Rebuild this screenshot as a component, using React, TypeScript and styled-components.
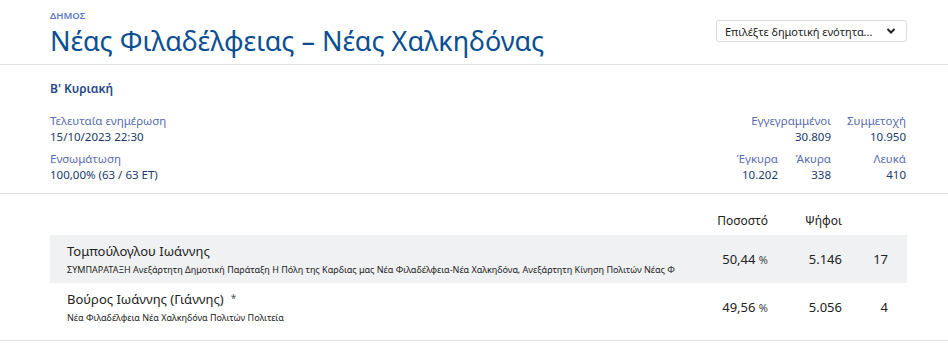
import styled, { createGlobalStyle } from "styled-components";

const GlobalStyle = createGlobalStyle`
    html, body {
        margin: 0;
        padding: 0;
        background: #ffffff;
        font-family: "Noto Sans", "Open Sans", sans-serif;
        color: #222;
    }
`;

interface Candidate {
    name: string;
    mark?: boolean;
    party: string;
    percent: string;
    votes: string;
    seats: number;
}

const candidates: Candidate[] = [
    {
        name: "Τομπούλογλου Ιωάννης",
        party: "ΣΥΜΠΑΡΑΤΑΞΗ Ανεξάρτητη Δημοτική Παράταξη Η Πόλη της Καρδιας μας Νέα Φιλαδέλφεια-Νέα Χαλκηδόνα, Ανεξάρτητη Κίνηση Πολιτών Νέας Φ",
        percent: "50,44",
        votes: "5.146",
        seats: 17,
    },
    {
        name: "Βούρος Ιωάννης (Γιάννης)",
        mark: true,
        party: "Νέα Φιλαδέλφεια Νέα Χαλκηδόνα Πολιτών Πολιτεία",
        percent: "49,56",
        votes: "5.056",
        seats: 4,
    },
];

function App() {
    return (
        <Page>
            <GlobalStyle />
            <Header>
                <div>
                    <Kicker>Δημος</Kicker>
                    <Title>Νέας Φιλαδέλφειας – Νέας Χαλκηδόνας</Title>
                </div>
                <SelectBox>
                    <span>Επιλέξτε δημοτική ενότητα...</span>
                    <svg width="10" height="8" viewBox="0 0 10 8">
                        <path d="M1.5 2 L5 5.5 L8.5 2" fill="none" stroke="#222" strokeWidth="2" />
                    </svg>
                </SelectBox>
            </Header>

            <Summary>
                <Round>Β' Κυριακή</Round>
                <SummaryBody>
                    <Info>
                        <Label>Τελευταία ενημέρωση</Label>
                        <Value>15/10/2023 22:30</Value>
                        <Label className="gap">Ενσωμάτωση</Label>
                        <Value>100,00% (63 / 63 ΕΤ)</Value>
                    </Info>
                    <Stats>
                        <Stat $span={2}>
                            <Label>Εγγεγραμμένοι</Label>
                            <Value>30.809</Value>
                        </Stat>
                        <Stat>
                            <Label>Συμμετοχή</Label>
                            <Value>10.950</Value>
                        </Stat>
                        <Stat>
                            <Label>Έγκυρα</Label>
                            <Value>10.202</Value>
                        </Stat>
                        <Stat>
                            <Label>Άκυρα</Label>
                            <Value>338</Value>
                        </Stat>
                        <Stat>
                            <Label>Λευκά</Label>
                            <Value>410</Value>
                        </Stat>
                    </Stats>
                </SummaryBody>
            </Summary>

            <Results>
                <HeadRow>
                    <span />
                    <HeadCell>Ποσοστό</HeadCell>
                    <HeadCell>Ψήφοι</HeadCell>
                    <span />
                </HeadRow>
                {candidates.map((c, i) => (
                    <Row key={c.name} $shaded={i === 0}>
                        <div>
                            <Name>
                                {c.name}
                                {c.mark && <Mark>*</Mark>}
                            </Name>
                            <Party>{c.party}</Party>
                        </div>
                        <Num>
                            {c.percent} <small>%</small>
                        </Num>
                        <Num>{c.votes}</Num>
                        <Num>{c.seats}</Num>
                    </Row>
                ))}
            </Results>
        </Page>
    );
}

const Page = styled.div`
    width: 948px;
    min-height: 343px;
`;

const Header = styled.header`
    display: flex;
    justify-content: space-between;
    align-items: flex-start;
    padding: 9px 41px 0 50px;
    height: 55px;
    border-bottom: 1px solid #dfe3e8;
`;

const Kicker = styled.div`
    font-size: 9.5px;
    line-height: 13px;
    text-transform: uppercase;
    color: #5b78c6;
    font-weight: 600;
`;

const Title = styled.h1`
    margin: 0;
    font-size: 27px;
    line-height: 37px;
    font-weight: 400;
    color: #0b4f92;
`;

const SelectBox = styled.div`
    margin-top: 11px;
    width: 191px;
    height: 22px;
    box-sizing: border-box;
    border: 1px solid #dcdcdc;
    border-radius: 3px;
    display: flex;
    align-items: center;
    justify-content: space-between;
    padding: 0 10px 0 8px;
    font-size: 11px;
    color: #222;
`;

const Summary = styled.section`
    padding: 16px 41px 10px 50px;
    border-bottom: 1px solid #dfe3e8;
`;

const Round = styled.div`
    font-size: 12px;
    font-weight: 600;
    color: #1f4a8a;
    line-height: 16px;
    margin-bottom: 16px;
`;

const SummaryBody = styled.div`
    display: flex;
    justify-content: space-between;
    align-items: flex-start;
`;

const Info = styled.div`
    .gap {
        margin-top: 6px;
    }
`;

const Label = styled.div`
    font-size: 11.5px;
    line-height: 16px;
    color: #5a6cb0;
`;

const Value = styled.div`
    font-size: 11.5px;
    line-height: 16px;
    color: #1b3a6b;
`;

const Stats = styled.div`
    display: grid;
    grid-template-columns: 60px 53px 75px;
    row-gap: 6px;
    margin-right: 1px;
`;

const Stat = styled.div<{ $span?: number }>`
    grid-column: span ${({ $span }) => $span ?? 1};
    text-align: right;
`;

const Results = styled.section`
    padding: 11px 41px 9px 50px;
    border-bottom: 1px solid #dfe3e8;
`;

const Grid = styled.div`
    display: grid;
    grid-template-columns: 1fr 90px 74px 46px;
    padding-right: 19px;
    align-items: center;
`;

const HeadRow = styled(Grid)`
    height: 30px;
`;

const HeadCell = styled.div`
    font-size: 12px;
    text-align: right;
    color: #222;
`;

const Row = styled(Grid)<{ $shaded: boolean }>`
    height: 48px;
    padding-left: 17px;
    background: ${({ $shaded }) => ($shaded ? "#f0f1f3" : "transparent")};
`;

const Name = styled.div`
    font-size: 13px;
    line-height: 18px;
    color: #222;
`;

const Mark = styled.span`
    font-size: 10px;
    vertical-align: 2px;
    margin-left: 7px;
    color: #555;
`;

const Party = styled.div`
    font-size: 9px;
    line-height: 14px;
    margin-top: 3px;
    color: #222;
    white-space: nowrap;
`;

const Num = styled.div`
    font-size: 13px;
    text-align: right;
    color: #222;

    small {
        font-size: 11px;
        color: #444;
    }
`;

export default App;
